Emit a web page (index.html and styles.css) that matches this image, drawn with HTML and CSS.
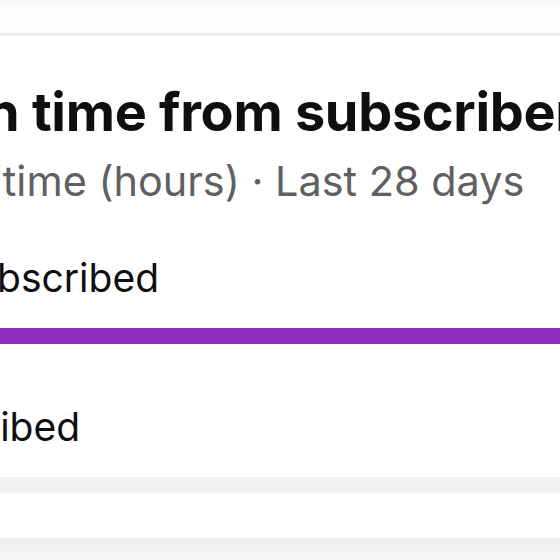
FILE: index.html
```html
<!DOCTYPE html>
<html lang="en">
<head>
<meta charset="utf-8">
<title>Watch time from subscribers</title>
<link rel="stylesheet" href="styles.css">
</head>
<body>
<div class="screen">
  <div class="prev-card"></div>
  <section class="card">
    <h2 class="title">Watch time from subscribers</h2>
    <p class="subtitle">Watch time (hours) · Last 28 days</p>
    <div class="row">
      <div class="label label-sub">Subscribed</div>
      <div class="bar"><div class="fill" style="width:100%"></div></div>
    </div>
    <div class="row">
      <div class="label label-not">Not subscribed</div>
    </div>
  </section>
  <div class="separator"></div>
  <div class="next-card"></div>
  <div class="footer-band"></div>
</div>
</body>
</html>
```
FILE: styles.css
```css
* { box-sizing: border-box; }
html, body { margin: 0; padding: 0; background: #ffffff; }
body { font-family: Inter, "Noto Sans", sans-serif; color: #0f0f0f; }
.screen { width: 560px; height: 560px; overflow: hidden; display: flex; flex-direction: column; background: #ffffff; }
.prev-card { height: 36px; flex: none; background: linear-gradient(#f8f8f8 0, #f8f8f8 4px, #fdfdfd 4px, #fdfdfd 33px, #efefef 33px); }
.card { flex: none; height: 441px; padding-top: 44px; background: #ffffff; white-space: nowrap; }
.title { margin: 0; font-size: 54px; line-height: 64px; font-weight: 700; letter-spacing: -0.3px; margin-left: -148px; color: #0f0f0f; }
.subtitle { margin: 13px 0 0; font-size: 41.4px; line-height: 48px; font-weight: 400; color: #606060; margin-left: -132px; }
.row { display: flex; flex-direction: column; }
.label { font-size: 39px; line-height: 48px; color: #0f0f0f; }
.label-sub { margin-top: 49px; margin-left: -51px; }
.label-not { margin-top: 59px; margin-left: -202px; }
.bar { margin-top: 26px; height: 16px; background: #f2f2f2; }
.fill { height: 100%; background: #8e2ebe; }
.separator { height: 17px; flex: none; background: #f2f2f2; border-bottom: 1px solid #fafafa; }
.next-card { height: 44px; flex: none; background: #ffffff; }
.footer-band { flex: 1; background: linear-gradient(#eeeeee, #f6f6f6); }
```
